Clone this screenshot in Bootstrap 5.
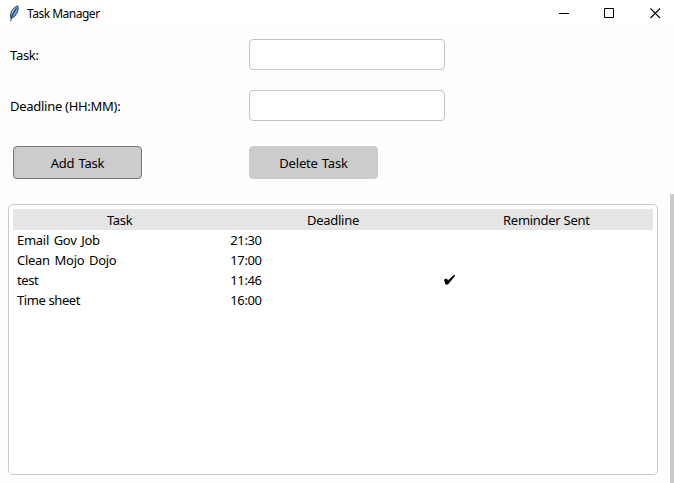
<!DOCTYPE html>
<html lang="en">
<head>
<meta charset="utf-8">
<title>Task Manager</title>
<link href="https://cdn.jsdelivr.net/npm/bootstrap@5.3.0/dist/css/bootstrap.min.css" rel="stylesheet">
<style>
body{font:13px/20px "Noto Sans","Open Sans",sans-serif;letter-spacing:-.28px;color:#000;background:#fefefe;height:483px}
.titlebar{height:27px;background:#fff;font-size:12px;letter-spacing:-.5px}
.quill{width:12px;height:17px;margin:-1px 7px 0 8px}
.win-controls{gap:35px;margin-right:13px}
.entry-form{height:167px;padding:12px 0 0 8px}
.field-row{height:31px;margin-bottom:20px}
.field-name{width:241px;padding:1px 0 0 2px}
.form-control.entry{width:196px;height:31px;border:1px solid #c4c4c4;border-radius:4px;background:#fff;padding:4px}
.actions{margin-top:25px;padding-left:5px;gap:107px}
.btn.tool{width:129px;height:33px;font-size:13px;line-height:20px;letter-spacing:-.2px;word-spacing:1px;padding:0;border:1px solid #ccc;border-radius:4px;background:#ccc;color:#000}
.btn.tool.focused{border-color:#767676}
.tasks-frame{width:650px;height:271px;margin:10px 0 0 8px;border:1px solid #c8c8c8;border-radius:5px;padding:4px;background:#fff}
.task-grid{table-layout:fixed;line-height:20px}
.task-grid.table>:not(caption)>*>*{padding:0 4px;border:0;height:20px;color:#000;background:transparent}
.task-grid.table>thead>tr>th{height:21px;padding-top:1px;background:#e5e5e5;font-weight:400;text-align:center}
.task-grid td.wide-gap{word-spacing:1.6px}
.task-grid td.narrow{letter-spacing:-.4px}
.scroll-thumb{width:4px;background:#cbcbcb}
</style>
</head>
<body class="d-flex flex-column overflow-hidden">
<header class="titlebar d-flex align-items-center flex-shrink-0">
<svg class="quill" viewBox="0 0 12 17"><path d="M2.6 12.8C1.8 8.5 4 3 9.6.8c1.4 2.6.2 7-3 10.6l-2.4 1.6z" fill="#5c9be0" stroke="#2b3a4c" stroke-width=".9"/><path d="M2.6 16.2Q3.6 9.5 8.4 3" fill="none" stroke="#14202c" stroke-width=".9"/><path d="M4 8Q5 4.8 7.9 2.6" fill="none" stroke="#b3d7f5" stroke-width=".9"/></svg>
<span>Task Manager</span>
<div class="win-controls d-flex ms-auto">
<svg width="10" height="11" shape-rendering="crispEdges"><path d="M0 5.5h10" stroke="#000"/></svg>
<svg width="11" height="11" viewBox="0 0 11 11"><path d="M.5 .5h9v9h-9z" fill="none" stroke="#000"/></svg>
<svg width="11" height="11" viewBox="0 0 11 11"><path d="M.5.5l9.5 9.5M10 .5L.5 10" stroke="#000" stroke-width="1.1"/></svg>
</div>
</header>
<form class="entry-form flex-shrink-0">
<div class="field-row d-flex align-items-center"><label class="field-name" for="task">Task:</label><input id="task" class="form-control entry"></div>
<div class="field-row d-flex align-items-center mb-0"><label class="field-name" for="due">Deadline (HH:MM):</label><input id="due" class="form-control entry"></div>
<div class="actions d-flex"><button type="button" class="btn tool focused">Add Task</button><button type="button" class="btn tool">Delete Task</button></div>
</form>
<main class="d-flex justify-content-between flex-grow-1">
<div class="tasks-frame">
<table class="table task-grid mb-0">
<thead><tr><th>Task</th><th>Deadline</th><th>Reminder Sent</th></tr></thead>
<tbody>
<tr><td class="wide-gap">Email Gov Job</td><td class="narrow">21:30</td><td></td></tr>
<tr><td class="wide-gap">Clean Mojo Dojo</td><td class="narrow">17:00</td><td></td></tr>
<tr><td class="narrow">test</td><td class="narrow">11:46</td><td class="align-middle"><svg class="d-block" width="12" height="10" viewBox="0 0 12 10"><path d="M0 4.5l3-1 .8 2L10 0h1v1L4 9.5H1.5z"/></svg></td></tr>
<tr><td class="narrow">Time sheet</td><td class="narrow">16:00</td><td></td></tr>
</tbody>
</table>
</div>
<div class="scroll-thumb"></div>
</main>
<script src="https://cdn.jsdelivr.net/npm/bootstrap@5.3.0/dist/js/bootstrap.bundle.min.js"></script>
</body>
</html>
